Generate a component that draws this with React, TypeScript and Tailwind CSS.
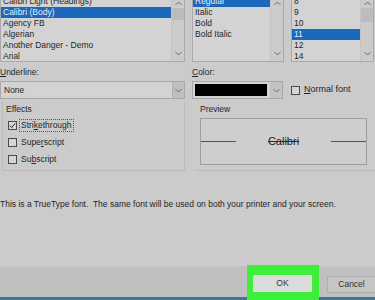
import React from "react";

function Chevron({ up, className = "" }: { up?: boolean; className?: string }) {
  return (
    <svg width="7" height="5" viewBox="0 0 7 5" className={className}>
      <path
        d={up ? "M0.5 4 L3.5 1 L6.5 4" : "M0.5 1 L3.5 4 L6.5 1"}
        fill="none"
        stroke="#6a6a6a"
        strokeWidth="1"
      />
    </svg>
  );
}

function Scrollbar({ thumbTop, thumbH, light }: { thumbTop: number; thumbH: number; light?: boolean }) {
  return (
    <div className="relative w-[13px] h-full bg-[#cbcbcb] border-l border-[#c4c4c4]">
      <Chevron up className="absolute left-[3px] top-[1px]" />
      {!light && (
        <div
          className="absolute left-0 right-0 bg-[#bcbcbc]"
          style={{ top: thumbTop, height: thumbH }}
        />
      )}
      <Chevron className="absolute left-[3px] bottom-[5px]" />
    </div>
  );
}

function ListBox({
  items,
  selected,
  width,
  thumbTop,
  thumbH,
  light,
}: {
  items: string[];
  selected: number;
  width: string;
  thumbTop: number;
  thumbH: number;
  light?: boolean;
}) {
  return (
    <div className={`${width} h-[62px] flex bg-[#d3d3d3] border border-t-0 border-[#a9a9a9]`}>
      <div className="flex-1 overflow-hidden">
        <div className="-mt-[4px]">
          {items.map((it, i) => (
            <div
              key={it}
              className={`h-[11px] leading-[11px] pl-[2px] whitespace-nowrap ${
                i === selected ? "bg-[#1a69bd] text-[#e8eef8]" : "text-[#262626]"
              }`}
            >
              {it}
            </div>
          ))}
        </div>
      </div>
      <Scrollbar thumbTop={thumbTop} thumbH={thumbH} light={light} />
    </div>
  );
}

function Check({ checked }: { checked?: boolean }) {
  return (
    <div className="w-[9px] h-[9px] border border-[#4a4a4a] bg-[#d6d6d6] flex items-center justify-center">
      {checked && (
        <svg width="7" height="7" viewBox="0 0 7 7">
          <path d="M0.8 3.6 L2.7 5.5 L6.3 1.2" fill="none" stroke="#2a2a2a" strokeWidth="1" />
        </svg>
      )}
    </div>
  );
}

export default function App() {
  return (
    <div className="w-[375px] h-[300px] overflow-hidden bg-[#cbcbcb] flex flex-col text-[8.5px] text-[#262626] font-['Liberation_Sans',Arial,sans-serif]">
      {/* Lists */}
      <div className="flex h-[62px]">
        <ListBox
          width="w-[185px]"
          items={[
            "Calibri Light (Headings)",
            "Calibri (Body)",
            "Agency FB",
            "Algerian",
            "Another Danger - Demo",
            "Arial",
          ]}
          selected={1}
          thumbTop={8}
          thumbH={12}
        />
        <div className="w-[7px]" />
        <ListBox
          width="w-[92px]"
          items={["Regular", "Italic", "Bold", "Bold Italic"]}
          selected={0}
          thumbTop={0}
          thumbH={0}
          light
        />
        <div className="w-[7px]" />
        <ListBox
          width="w-[83px]"
          items={["8", "9", "10", "11", "12", "14"]}
          selected={3}
          thumbTop={8}
          thumbH={14}
        />
      </div>

      {/* Labels */}
      <div className="flex mt-[5px] h-[11px] leading-[11px]">
        <div className="w-[192px]">
          <span className="underline">U</span>nderline:
        </div>
        <div>
          <span className="underline">C</span>olor:
        </div>
      </div>

      {/* Dropdowns */}
      <div className="flex mt-[3px] h-[18px]">
        <div className="w-[185px] flex border border-[#a9a9a9] bg-[#d3d3d3]">
          <div className="flex-1 pl-[3px] leading-[16px]">None</div>
          <div className="w-[12px] bg-[#bfbfbf] border-l border-[#b0b0b0] flex items-center justify-center">
            <Chevron />
          </div>
        </div>
        <div className="w-[7px]" />
        <div className="w-[91px] flex border border-[#a9a9a9] bg-[#d3d3d3]">
          <div className="flex-1 p-[2px] pr-[3px]">
            <div className="w-full h-full bg-black" />
          </div>
          <div className="w-[12px] bg-[#c3c3c3] flex items-center justify-center">
            <Chevron />
          </div>
        </div>
        <div className="w-[8px]" />
        <div className="flex items-center gap-[4px]">
          <Check />
          <span className="text-[9px]">
            <span className="underline">N</span>ormal font
          </span>
        </div>
      </div>

      {/* Effects + Preview */}
      <div className="flex mt-[3px] h-[69px]">
        <div className="ml-[2px] w-[183px] border border-t-0 border-[#bababa] pl-[3px]">
          <div className="h-[10px] leading-[10px] mt-[2px]">Effects</div>
          <div className="flex flex-col gap-[7px] mt-[6px] pl-[2px]">
            <div className="flex items-center gap-[3px] h-[10px]">
              <Check checked />
              <span className="outline-1 outline-dotted outline-[#555] px-[1px] leading-[11px]">
                Stri<span className="underline">k</span>ethrough
              </span>
            </div>
            <div className="flex items-center gap-[4px] h-[10px]">
              <Check />
              <span>
                Supe<span className="underline">r</span>script
              </span>
            </div>
            <div className="flex items-center gap-[4px] h-[10px]">
              <Check />
              <span>
                Su<span className="underline">b</span>script
              </span>
            </div>
          </div>
        </div>
        <div className="ml-[9px] flex-1 border-b border-[#bababa] pl-[6px] pr-[8px]">
          <div className="h-[10px] leading-[10px] mt-[2px]">Preview</div>
          <div className="mt-[4px] h-[47px] border border-[#9e9e9e] bg-[#cecece] flex items-center">
            <div className="w-[35px] h-px bg-[#555]" />
            <div className="flex-1 text-center text-[11px] line-through">Calibri</div>
            <div className="w-[35px] h-px bg-[#555]" />
          </div>
        </div>
      </div>

      {/* Info text */}
      <div className="mt-[28px] leading-[11px] whitespace-nowrap">
        This is a TrueType font.&nbsp; The same font will be used on both your printer and your screen.
      </div>

      {/* Button bar */}
      <div className="mt-auto relative h-[34px] bg-[#c0c0c0] border-t border-[#c5c5c5] flex justify-end gap-[8px]">
        <div className="absolute left-0 right-0 bottom-0 h-[3px] bg-[#3b7997]" />
        <div className="relative -mt-[2px] h-[36px] w-[72px] bg-[#3fee3a] pt-[10px] pl-[6px]">
          <div className="w-[59px] h-[17px] bg-[#dcdcdc] flex items-center justify-center text-[#333]">
            OK
          </div>
        </div>
        <div className="w-[48px] h-[17px] mt-[9px] bg-[#c5c5c5] border border-r-0 border-[#adadad] flex items-center justify-center text-[#333]">
          Cancel
        </div>
      </div>
    </div>
  );
}
